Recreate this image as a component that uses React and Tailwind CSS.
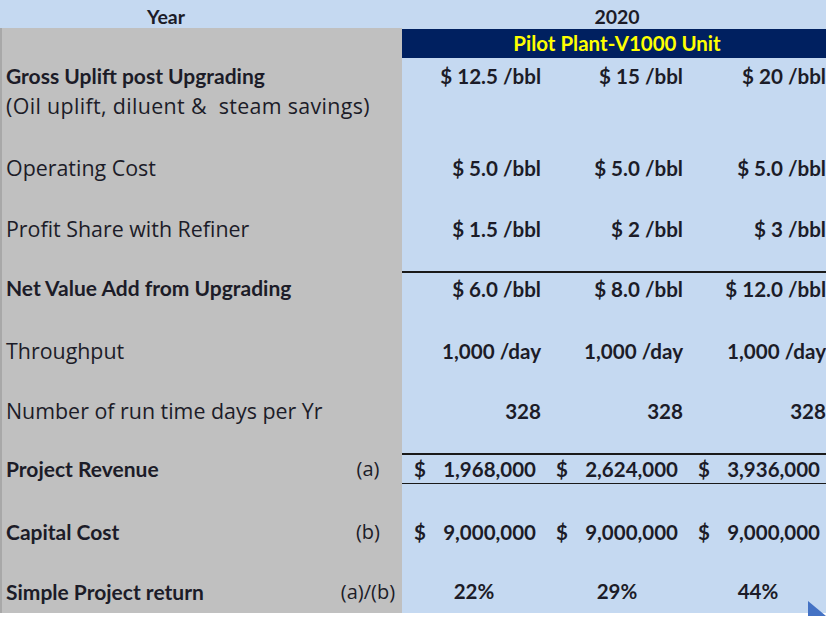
import React from "react";

const B = "font-['Lato',sans-serif] font-bold";
const R = "font-['Open_Sans',sans-serif]";

function Row({ h, label, labelBold, tag, cells, kind, border }) {
  return (
    <div className={`grid grid-cols-[402px_142px_142px_140px] ${h}`}>
      <div className="bg-[#c0c0c0] border-l-2 border-[#a8a8a8] flex items-center pl-[4px] relative">
        {label && (
          <span className={`${labelBold ? B + " text-[21px]" : R + " text-[21.4px]"} text-[#1c1c28] whitespace-nowrap`}>{label}</span>
        )}
        {tag && (
          <span className={`${R} absolute left-[326px] w-[80px] text-center text-[20px] text-[#1c1c28]`}>{tag}</span>
        )}
      </div>
      {[0, 1, 2].map((i) => (
        <div
          key={i}
          className={`bg-[#c5d9f1] flex items-center overflow-hidden ${border || ""}`}
        >
          {cells && cells[i] !== undefined && kind === "right" && (
            <span className={`${B} text-[20.6px] text-[#1c1c28] w-full text-right whitespace-nowrap ${i === 2 ? "pr-0" : "pr-[3px]"}`}>{cells[i]}</span>
          )}
          {cells && kind === "acct" && (
            <div className={`${B} text-[20.5px] text-[#1c1c28] w-full flex justify-between pl-[12px] pt-[2px] ${i === 2 ? "pr-[6px]" : "pr-[8px]"}`}>
              <span>$</span>
              <span>{cells[i]}</span>
            </div>
          )}
          {cells && kind === "center" && (
            <span className={`${B} text-[20.5px] text-[#1c1c28] w-full text-center ${i === 0 ? "pl-[2px]" : "pl-[4px]"}`}>{cells[i]}</span>
          )}
        </div>
      ))}
    </div>
  );
}

function Blank({ h }) {
  return <Row h={h} />;
}

export default function App() {
  return (
    <div className="relative w-[826px] h-[617px] bg-white overflow-hidden">
      <div className="grid grid-cols-[402px_424px] h-[28px] bg-[#c5d9f1]">
        <div className={`${B} text-[19.5px] text-[#1c1c28] flex items-center justify-center pt-[2px] pl-[2px] pr-[72px]`}>Year</div>
        <div className={`${B} text-[19.5px] text-[#1c1c28] flex items-center justify-center pt-[2px] pl-[6px]`}>2020</div>
      </div>
      <div className="grid grid-cols-[402px_424px] h-[33px]">
        <div className="bg-[#c0c0c0] border-l-2 border-[#a8a8a8]" />
        <div className="bg-[#c5d9f1] pt-[1px]">
          <div className={`h-[29px] bg-[#002060] flex items-center justify-center pl-[6px] ${B} text-[20.5px] text-[#ffff00]`}>
            Pilot Plant-V1000 Unit
          </div>
        </div>
      </div>
      {/* Gross uplift: two lines */}
      <div className="grid grid-cols-[402px_142px_142px_140px] h-[60px]">
        <div className="bg-[#c0c0c0] border-l-2 border-[#a8a8a8] pl-[4px] flex flex-col">
          <div className={`h-[30px] flex items-center ${B} text-[21px] text-[#1c1c28] whitespace-nowrap`}>Gross Uplift post Upgrading</div>
          <div className={`h-[30px] flex items-center ${R} text-[21.4px] tracking-[0.35px] text-[#1c1c28] whitespace-pre`}>{"(Oil uplift, diluent &  steam savings)"}</div>
        </div>
        {["$ 12.5 /bbl", "$ 15 /bbl", "$ 20 /bbl"].map((t, i) => (
          <div key={i} className="bg-[#c5d9f1] overflow-hidden">
            <div className={`h-[30px] flex items-center justify-end ${B} text-[20.6px] text-[#1c1c28] whitespace-nowrap ${i === 2 ? "pr-0" : "pr-[3px]"}`}>{t}</div>
          </div>
        ))}
      </div>
      <Blank h="h-[31px]" />
      <Row h="h-[30px]" label="Operating Cost" kind="right" cells={["$ 5.0 /bbl", "$ 5.0 /bbl", "$ 5.0 /bbl"]} />
      <Blank h="h-[31px]" />
      <Row h="h-[30px]" label="Profit Share with Refiner" kind="right" cells={["$ 1.5 /bbl", "$ 2 /bbl", "$ 3 /bbl"]} />
      <Blank h="h-[28px]" />
      <Row h="h-[34px]" label="Net Value Add from Upgrading" labelBold kind="right" border="border-t-2 border-[#1a1a1a]" cells={["$ 6.0 /bbl", "$ 8.0 /bbl", "$ 12.0 /bbl"]} />
      <Blank h="h-[30px]" />
      <Row h="h-[30px]" label="Throughput" kind="right" cells={["1,000 /day", "1,000 /day", "1,000 /day"]} />
      <Blank h="h-[30px]" />
      <Row h="h-[30px]" label="Number of run time days per Yr" kind="right" cells={["328", "328", "328"]} />
      <Blank h="h-[28px]" />
      <Row h="h-[31px]" label="Project Revenue" labelBold tag="(a)" kind="acct" border="border-y-2 border-[#1a1a1a]" cells={["1,968,000", "2,624,000", "3,936,000"]} />
      <Blank h="h-[32px]" />
      <Row h="h-[30px]" label="Capital Cost" labelBold tag="(b)" kind="acct" cells={["9,000,000", "9,000,000", "9,000,000"]} />
      <Blank h="h-[30px]" />
      <Row h="h-[30px]" label="Simple Project return" labelBold tag="(a)/(b)" kind="center" cells={["22%", "29%", "44%"]} />
      <Blank h="h-[7px]" />
      <svg className="absolute left-[806px] top-[601px]" width="20" height="16" viewBox="0 0 20 16">
        <polygon points="2,0 20,15 2,15" fill="#4472c4" />
      </svg>
    </div>
  );
}
